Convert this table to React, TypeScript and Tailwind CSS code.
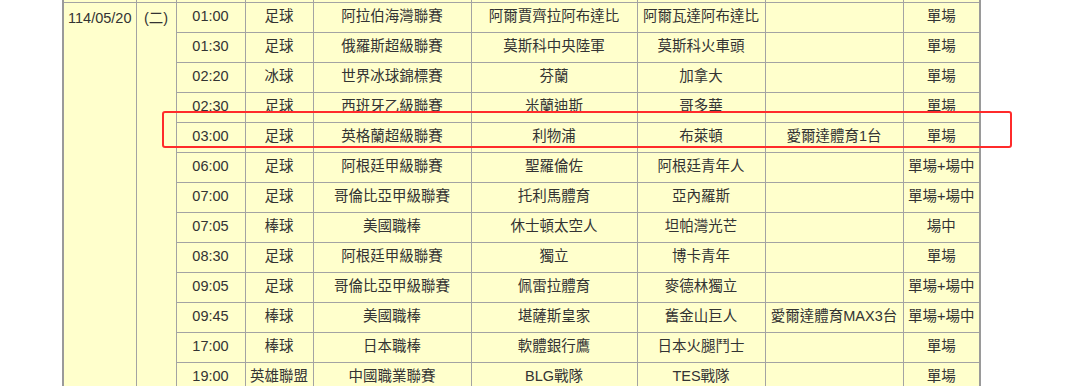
import React from 'react';

type Match = {
  time: string;
  sport: string;
  league: string;
  home: string;
  away: string;
  channel?: string;
  type: string;
};

const matches: Match[] = [
  { time: '01:00', sport: '足球', league: '阿拉伯海灣聯賽', home: '阿爾賈齊拉阿布達比', away: '阿爾瓦達阿布達比', type: '單場' },
  { time: '01:30', sport: '足球', league: '俄羅斯超級聯賽', home: '莫斯科中央陸軍', away: '莫斯科火車頭', type: '單場' },
  { time: '02:20', sport: '冰球', league: '世界冰球錦標賽', home: '芬蘭', away: '加拿大', type: '單場' },
  { time: '02:30', sport: '足球', league: '西班牙乙級聯賽', home: '米蘭迪斯', away: '哥多華', type: '單場' },
  { time: '03:00', sport: '足球', league: '英格蘭超級聯賽', home: '利物浦', away: '布萊頓', channel: '愛爾達體育1台', type: '單場' },
  { time: '06:00', sport: '足球', league: '阿根廷甲級聯賽', home: '聖羅倫佐', away: '阿根廷青年人', type: '單場+場中' },
  { time: '07:00', sport: '足球', league: '哥倫比亞甲級聯賽', home: '托利馬體育', away: '亞內羅斯', type: '單場+場中' },
  { time: '07:05', sport: '棒球', league: '美國職棒', home: '休士頓太空人', away: '坦帕灣光芒', type: '場中' },
  { time: '08:30', sport: '足球', league: '阿根廷甲級聯賽', home: '獨立', away: '博卡青年', type: '單場' },
  { time: '09:05', sport: '足球', league: '哥倫比亞甲級聯賽', home: '佩雷拉體育', away: '麥德林獨立', type: '單場+場中' },
  { time: '09:45', sport: '棒球', league: '美國職棒', home: '堪薩斯皇家', away: '舊金山巨人', channel: '愛爾達體育MAX3台', type: '單場+場中' },
  { time: '17:00', sport: '棒球', league: '日本職棒', home: '軟體銀行鷹', away: '日本火腿鬥士', type: '單場' },
  { time: '19:00', sport: '英雄聯盟', league: '中國職業聯賽', home: 'BLG戰隊', away: 'TES戰隊', type: '單場' },
];

const cell = 'border border-[#a3a3a3] p-0 h-[30px] text-center whitespace-nowrap';

export default function App() {
  return (
    <div
      className="relative w-[1080px] h-[386px] overflow-hidden bg-white text-[#333] text-[14.5px]"
      style={{ fontFamily: '"Liberation Sans", "Noto Sans CJK TC", sans-serif' }}
    >
      <table className="ml-[62px] w-[917px] table-fixed border-collapse bg-[#ffffcc] border-x-2 border-x-[#9a9a9a]">
        <colgroup>
          <col className="w-[73px]" />
          <col className="w-[40px]" />
          <col className="w-[69px]" />
          <col className="w-[68px]" />
          <col className="w-[158px]" />
          <col className="w-[166px]" />
          <col className="w-[128px]" />
          <col className="w-[138px]" />
          <col className="w-[77px]" />
        </colgroup>
        <tbody>
          {/* sliver of the previous day's row */}
          <tr className="h-[2px]">
            {Array.from({ length: 9 }).map((_, i) => (
              <td key={i} className="border-x border-b border-[#a3a3a3] p-0 h-[2px] leading-[0]" />
            ))}
          </tr>
          {matches.map((m, i) => (
            <tr key={m.time}>
              {i === 0 ? (
                <>
                  <td rowSpan={matches.length} className={`${cell} align-top pt-[5px]`}>
                    114/05/20
                  </td>
                  <td rowSpan={matches.length} className={`${cell} align-top pt-[5px]`}>
                    (二)
                  </td>
                </>
              ) : null}
              <td className={cell}>{m.time}</td>
              <td className={cell}>{m.sport}</td>
              <td className={cell}>{m.league}</td>
              <td className={cell}>{m.home}</td>
              <td className={cell}>{m.away}</td>
              <td className={cell}>{m.channel ?? ''}</td>
              <td className={cell}>{m.type}</td>
            </tr>
          ))}
        </tbody>
      </table>

      {/* highlight marker */}
      <div className="absolute left-[162px] top-[111px] w-[850px] h-[37px] border-[2.5px] border-[#ff2b2b] rounded-[3px]" />
    </div>
  );
}
